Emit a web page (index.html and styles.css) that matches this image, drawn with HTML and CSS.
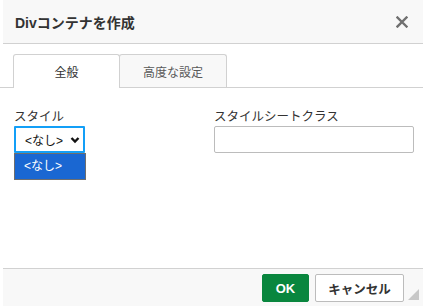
FILE: index.html
```html
<!DOCTYPE html>
<html lang="ja">
  <head>
    <meta charset="UTF-8" />
    <title>Divコンテナを作成</title>
    <link rel="stylesheet" href="styles.css">
  </head>
  <body>
    <div class="dialog">
      <div class="dialog-title">
        <span>Divコンテナを作成</span>
        <svg class="close" width="12" height="12" viewBox="0 0 12 12">
          <path d="M1.5 1.5 L10.5 10.5 M10.5 1.5 L1.5 10.5" stroke="#707070" stroke-width="2.4" stroke-linecap="square" />
        </svg>
      </div>

      <div class="dialog-body">
        <div class="tabs">
          <div class="tab active">全般</div>
          <div class="tab">高度な設定</div>
        </div>

        <div class="fields">
          <div class="field field-style">
            <label>スタイル</label>
            <div class="select">
              <span>&lt;なし&gt;</span>
              <svg width="10" height="8" viewBox="0 0 10 8">
                <path d="M1.5 2 L5 5.5 L8.5 2" fill="none" stroke="#111" stroke-width="2.4" />
              </svg>
            </div>
            <div class="select-list">
              <div class="option selected">&lt;なし&gt;</div>
            </div>
          </div>

          <div class="field field-class">
            <label>スタイルシートクラス</label>
            <input type="text" />
          </div>
        </div>
      </div>

      <div class="dialog-footer">
        <button class="btn btn-ok">OK</button>
        <button class="btn btn-cancel">キャンセル</button>
        <div class="resize"></div>
      </div>
    </div>
  </body>
</html>
```

FILE: styles.css
```css
html, body {
  margin: 0;
  padding: 0;
  background-color: #fff;
}
body {
  font-family: "Liberation Sans", "Noto Sans CJK JP", sans-serif;
  font-size: 12px;
  color: #333;
}
.dialog {
  margin-left: 3px;
  width: 420px;
  height: 306px;
  display: flex;
  flex-direction: column;
  background-color: #fff;
}
.dialog-title {
  height: 44px;
  box-sizing: border-box;
  border-bottom: 1px solid #d1d1d1;
  background-color: #f8f8f8;
  display: flex;
  align-items: center;
  justify-content: space-between;
  padding: 0 15px 0 12px;
  font-size: 14px;
  font-weight: bold;
  color: #333;
}
.close {
  display: block;
}
.dialog-body {
  flex: 1;
  padding-top: 10px;
}
.tabs {
  display: flex;
  border-bottom: 1px solid #d1d1d1;
  margin-left: -3px;
  padding-left: 13px;
}
.tab {
  width: 107px;
  height: 33px;
  box-sizing: border-box;
  border: 1px solid #d1d1d1;
  border-bottom: none;
  border-radius: 3px 3px 0 0;
  background-color: #f8f8f8;
  display: flex;
  align-items: center;
  justify-content: center;
  color: #595959;
}
.tab + .tab {
  width: 108px;
  margin-left: -1px;
}
.tab.active {
  background-color: #fff;
  height: 34px;
  margin-bottom: -1px;
  color: #333;
}
.fields {
  display: flex;
  gap: 17px;
  padding: 21px 0 0 11px;
}
.field {
  display: flex;
  flex-direction: column;
}
.field-style {
  width: 183px;
  position: relative;
}
.field-class {
  width: 200px;
}
label {
  display: block;
  height: 16px;
  line-height: 16px;
  margin-bottom: 1px;
  font-size: 12.5px;
  color: #333;
}
.select {
  width: 71px;
  height: 27px;
  box-sizing: border-box;
  border: 2px solid #139ff7;
  border-radius: 1px;
  display: flex;
  align-items: center;
  justify-content: space-between;
  padding: 0 3px 0 9px;
  background-color: #fff;
  color: #111;
}
.select svg {
  display: block;
}
.select-list {
  position: absolute;
  left: 0;
  top: 44px;
  width: 72px;
  box-sizing: border-box;
  border: 1px solid #6e6e6e;
  background-color: #fff;
}
.option {
  height: 25px;
  line-height: 25px;
  padding-left: 9px;
}
.option.selected {
  background-color: #1a67d2;
  color: #fff;
}
input {
  width: 200px;
  height: 27px;
  box-sizing: border-box;
  border: 1px solid #bcbcbc;
  border-radius: 2px;
  margin: 0;
  padding: 0 6px;
}
.dialog-footer {
  height: 38px;
  box-sizing: border-box;
  border-top: 1px solid #d1d1d1;
  background-color: #f8f8f8;
  display: flex;
  align-items: flex-start;
  justify-content: flex-end;
  gap: 6px;
  padding: 5px 19px 0 0;
  position: relative;
}
.btn {
  height: 28px;
  box-sizing: border-box;
  border-radius: 2px;
  font-family: "Liberation Sans", "Noto Sans CJK JP", sans-serif;
  font-size: 12.5px;
  font-weight: bold;
  cursor: pointer;
  margin: 0;
}
.btn-ok {
  width: 47px;
  background-color: #09863e;
  border: 1px solid #09863e;
  color: #fff;
  font-size: 13px;
}
.btn-cancel {
  width: 89px;
  background-color: #fff;
  border: 1px solid #bcbcbc;
  color: #333;
}
.resize {
  position: absolute;
  right: 4px;
  bottom: 6px;
  width: 0;
  height: 0;
  border-left: 11px solid transparent;
  border-bottom: 11px solid #c8c8c8;
}
```
